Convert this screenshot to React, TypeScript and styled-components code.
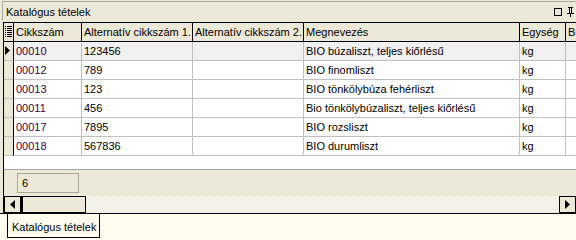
import React from "react";
import styled, { createGlobalStyle } from "styled-components";

const Global = createGlobalStyle`
  html, body { margin: 0; padding: 0; background: #ece9d8; }
  body { font-family: Tahoma, "Liberation Sans", Arial, sans-serif; font-size: 11px; color: #000; }
`;

const Frame = styled.div`
  width: 576px;
  height: 240px;
  overflow: hidden;
  background: #ece9d8;
  display: flex;
  flex-direction: column;
`;

const TitleBar = styled.div`
  height: 19px;
  margin: 1px 0 0 2px;
  border-top: 1px solid #aca899;
  border-left: 1px solid #aca899;
  display: flex;
  align-items: center;
  padding: 1px 0 0 3px;
  box-sizing: border-box;
`;

const TitleText = styled.span`
  flex: 1;
`;

const TitleIcons = styled.div`
  display: flex;
  align-items: center;
  gap: 5px;
  padding-right: 2px;
`;

const Grid = styled.div`
  margin: 2px 0 0 3px;
  border-left: 1px solid #000;
  border-top: 1px solid #000;
  display: flex;
  flex-direction: column;
  flex: 1;
  min-height: 0;
`;

const cols = "10px 68px 111px 111px 216px 46px 40px";

const HeaderRow = styled.div`
  display: grid;
  grid-template-columns: ${cols};
  height: 19px;
  background: #ece9d8;
`;

const HeadCell = styled.div`
  border-right: 1px solid #000;
  border-bottom: 1px solid #000;
  display: flex;
  align-items: center;
  padding-left: 2px;
  white-space: nowrap;
  overflow: hidden;
`;

const IndicatorHead = styled(HeadCell)`
  padding-left: 1px;
`;

const Body = styled.div`
  background: #fff;
  height: 128px;
  border-bottom: 1px solid #aca899;
`;

const Row = styled.div<{ $focused?: boolean }>`
  display: grid;
  grid-template-columns: ${cols};
  height: 19px;
  background: ${(p) => (p.$focused ? "#f0f0f0" : "#fff")};
`;

const Indicator = styled.div`
  background: #ece9d8;
  border-right: 1px solid #000;
  border-bottom: 1px solid #c0c0c0;
  display: flex;
  align-items: center;
  padding-left: 1px;
`;

const Cell = styled.div<{ $code?: boolean }>`
  border-right: 1px solid #c0c0c0;
  border-bottom: 1px solid #c0c0c0;
  display: flex;
  align-items: center;
  padding-left: 2px;
  white-space: nowrap;
  overflow: hidden;
  color: ${(p) => (p.$code ? "#400040" : "#000")};
`;

const Footer = styled.div`
  height: 26px;
  display: flex;
  align-items: center;
  padding-left: 13px;
`;

const CountBox = styled.div`
  width: 62px;
  height: 20px;
  box-sizing: border-box;
  border: 1px solid #aca899;
  display: flex;
  align-items: center;
  padding-left: 4px;
`;

const ScrollBar = styled.div`
  height: 17px;
  display: flex;
  background: repeating-conic-gradient(#ece9d8 0 25%, #fcfcfa 0 50%) 0 0 / 2px 2px;
`;

const ScrollBtn = styled.div`
  width: 17px;
  height: 17px;
  box-sizing: border-box;
  border: 1px solid #000;
  background: #ece9d8;
  display: flex;
  align-items: center;
  justify-content: center;
`;

const Thumb = styled.div`
  width: 65px;
  height: 17px;
  box-sizing: border-box;
  border: 1px solid #000;
  border-left-width: 2px;
  background: #ece9d8;
`;

const Track = styled.div`
  flex: 1;
`;

const TabStrip = styled.div`
  height: 26px;
  border-top: 1px solid #000;
  background: #fffcef;
  display: flex;
  padding-left: 7px;
`;

const Tab = styled.div`
  height: 24px;
  box-sizing: border-box;
  border: 1px solid #000;
  border-top: none;
  background: #fffcef;
  display: flex;
  align-items: center;
  padding: 2px 3px 0 4px;
`;

const rows = [
  ["00010", "123456", "", "BIO búzaliszt, teljes kiőrlésű", "kg"],
  ["00012", "789", "", "BIO finomliszt", "kg"],
  ["00013", "123", "", "BIO tönkölybúza fehérliszt", "kg"],
  ["00011", "456", "", "Bio tönkölybúzaliszt, teljes kiőrlésű", "kg"],
  ["00017", "7895", "", "BIO rozsliszt", "kg"],
  ["00018", "567836", "", "BIO durumliszt", "kg"],
];

const ListIcon = () => (
  <svg width="7" height="11" viewBox="0 0 7 11">
    <g fill="#000">
      {[0, 2, 4, 6, 8, 10].map((y) => (
        <React.Fragment key={y}>
          <rect x="0" y={y} width="1" height="1" />
          <rect x="2" y={y} width="5" height="1" />
        </React.Fragment>
      ))}
    </g>
  </svg>
);

const Pointer = () => (
  <svg width="5" height="9" viewBox="0 0 5 9">
    <path d="M0 0 L5 4.5 L0 9 Z" fill="#000" />
  </svg>
);

const Arrow = ({ left }: { left?: boolean }) => (
  <svg width="5" height="9" viewBox="0 0 5 9">
    <path d={left ? "M5 0 L0 4.5 L5 9 Z" : "M0 0 L5 4.5 L0 9 Z"} fill="#000" />
  </svg>
);

export default function App() {
  return (
    <Frame>
      <Global />
      <TitleBar>
        <TitleText>Katalógus tételek</TitleText>
        <TitleIcons>
          <svg width="8" height="8" viewBox="0 0 8 8">
            <rect x="0.5" y="0.5" width="7" height="7" fill="none" stroke="#000" />
          </svg>
          <svg width="7" height="10" viewBox="0 0 7 10">
            <path d="M1 0h5v1h-1v5h2v1h-3v3h-1v-3h-3v-1h2v-5h-1z M3 1v5h1v-5z" fill="#000" />
          </svg>
        </TitleIcons>
      </TitleBar>
      <Grid>
        <HeaderRow>
          <IndicatorHead>
            <ListIcon />
          </IndicatorHead>
          <HeadCell>Cikkszám</HeadCell>
          <HeadCell>Alternatív cikkszám 1.</HeadCell>
          <HeadCell>Alternatív cikkszám 2.</HeadCell>
          <HeadCell>Megnevezés</HeadCell>
          <HeadCell>Egység</HeadCell>
          <HeadCell>Bruttó</HeadCell>
        </HeaderRow>
        <Body>
          {rows.map((r, i) => (
            <Row key={r[0]} $focused={i === 0}>
              <Indicator>{i === 0 ? <Pointer /> : null}</Indicator>
              <Cell $code>{r[0]}</Cell>
              <Cell>{r[1]}</Cell>
              <Cell>{r[2]}</Cell>
              <Cell>{r[3]}</Cell>
              <Cell>{r[4]}</Cell>
              <Cell />
            </Row>
          ))}
        </Body>
        <Footer>
          <CountBox>6</CountBox>
        </Footer>
        <ScrollBar>
          <ScrollBtn>
            <Arrow left />
          </ScrollBtn>
          <Thumb />
          <Track />
          <ScrollBtn>
            <Arrow />
          </ScrollBtn>
        </ScrollBar>
      </Grid>
      <TabStrip>
        <Tab>Katalógus tételek</Tab>
      </TabStrip>
    </Frame>
  );
}
